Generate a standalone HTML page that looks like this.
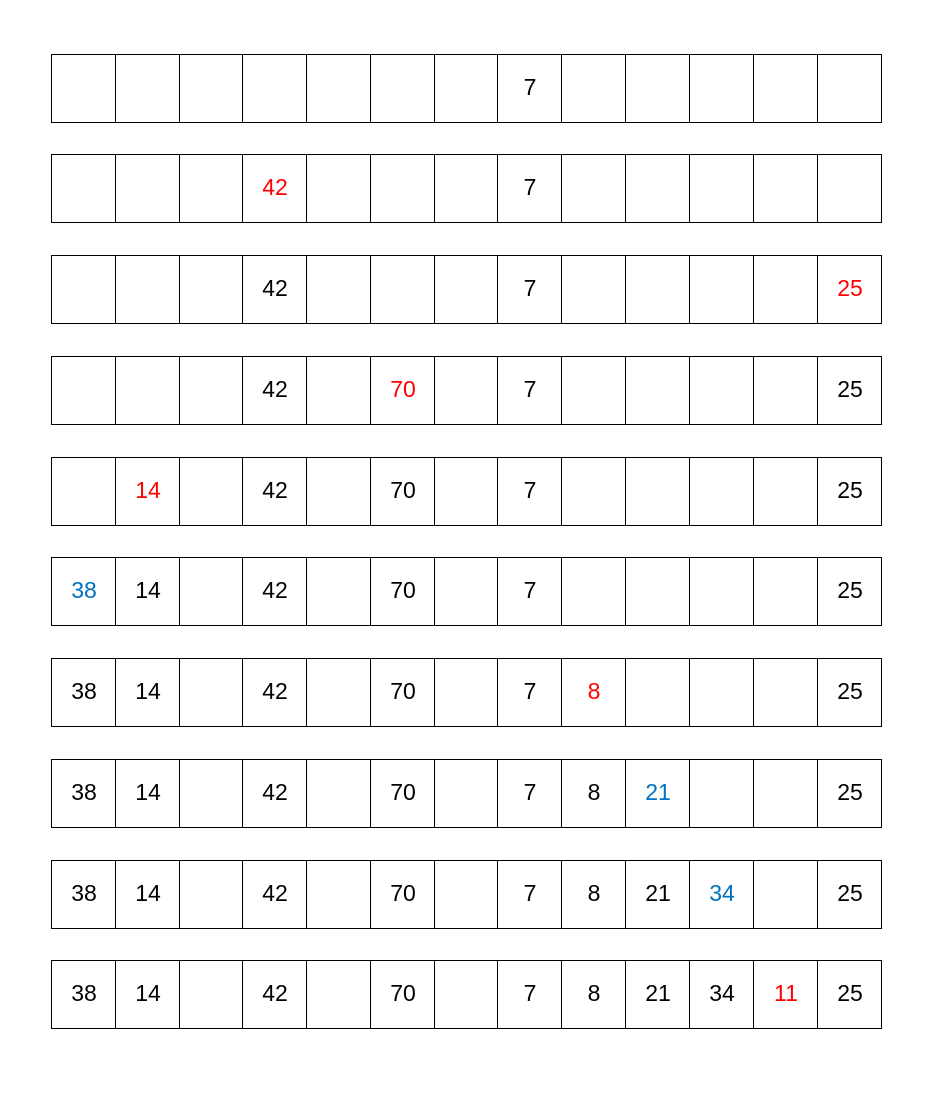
<!DOCTYPE html>
<html><head><style>body{margin:0;background:#fff}svg{display:block}</style></head><body>
<svg width="934" height="1098" xmlns="http://www.w3.org/2000/svg" font-family="Liberation Sans, sans-serif" font-size="23" text-anchor="middle">
<g id="grid" stroke="#000" stroke-width="1" fill="none"></g>
<g id="t"></g>
</svg>
<script>
const xs=[51,115,179,242,306,370,434,497,561,625,689,753,817,881];
const ys=[54,154,255,356,457,557,658,759,860,960];
const R='#ff0000',B='#0070c0',K='#000';
const data=[
 {7:['7',K]},
 {3:['42',R],7:['7',K]},
 {3:['42',K],7:['7',K],12:['25',R]},
 {3:['42',K],5:['70',R],7:['7',K],12:['25',K]},
 {1:['14',R],3:['42',K],5:['70',K],7:['7',K],12:['25',K]},
 {0:['38',B],1:['14',K],3:['42',K],5:['70',K],7:['7',K],12:['25',K]},
 {0:['38',K],1:['14',K],3:['42',K],5:['70',K],7:['7',K],8:['8',R],12:['25',K]},
 {0:['38',K],1:['14',K],3:['42',K],5:['70',K],7:['7',K],8:['8',K],9:['21',B],12:['25',K]},
 {0:['38',K],1:['14',K],3:['42',K],5:['70',K],7:['7',K],8:['8',K],9:['21',K],10:['34',B],12:['25',K]},
 {0:['38',K],1:['14',K],3:['42',K],5:['70',K],7:['7',K],8:['8',K],9:['21',K],10:['34',K],11:['11',R],12:['25',K]}
];
let g='',t='';
ys.forEach((y,r)=>{
 g+=`<rect x="51.5" y="${y+.5}" width="830" height="68"/>`;
 xs.slice(1,-1).forEach(x=>g+=`<line x1="${x+.5}" y1="${y}" x2="${x+.5}" y2="${y+69}"/>`);
 for(const c in data[r]){const [s,col]=data[r][c];const cx=(xs[c]+xs[+c+1])/2+1;
  t+=`<text x="${cx}" y="${y+41}" fill="${col}">${s}</text>`;}
});
document.getElementById('grid').innerHTML=g;
document.getElementById('t').innerHTML=t;
</script>
</body></html>
